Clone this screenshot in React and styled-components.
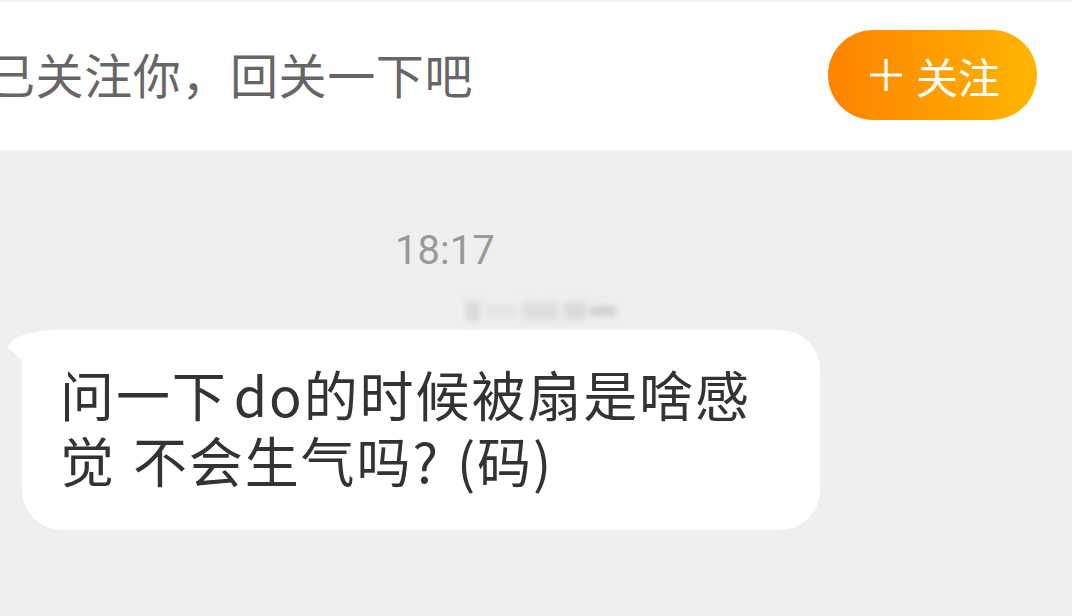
import React from 'react'
import styled, { createGlobalStyle } from 'styled-components'

const GlobalStyle = createGlobalStyle`
  html, body {
    margin: 0;
    padding: 0;
    background: #efefef;
  }
  body {
    width: 1072px;
    height: 616px;
    overflow: hidden;
    font-family: Roboto, "Noto Sans CJK SC", sans-serif;
  }
`

const Page = styled.div`
  display: flex;
  flex-direction: column;
  width: 1072px;
  height: 616px;
  background: #efefef;
`

const Header = styled.div`
  margin-top: 2px;
  height: 148px;
  background: #fff;
  display: flex;
  align-items: center;
  justify-content: space-between;
  padding-right: 35px;
  box-sizing: border-box;
`

const HeaderText = styled.div`
  margin-left: -13px;
  margin-top: -6px;
  font-family: "Noto Sans CJK SC", sans-serif;
  font-size: 48px;
  letter-spacing: 0.6px;
  color: #666;
  white-space: nowrap;
`

const FollowButton = styled.button`
  width: 209px;
  height: 90px;
  border: none;
  border-radius: 45px;
  background: linear-gradient(to right, #ff8200, #ffb500);
  display: flex;
  align-items: center;
  justify-content: center;
  gap: 13px;
  padding: 0 0 0 4px;
  margin-top: -2px;
  color: #fff;
  font-family: "Noto Sans CJK SC", sans-serif;
  font-size: 42px;
  cursor: pointer;
`

const PlusIcon = styled.svg`
  width: 34px;
  height: 34px;
  display: block;
`

const Chat = styled.div`
  display: flex;
  flex-direction: column;
  align-items: flex-start;
`

const Time = styled.div`
  margin-top: 76px;
  padding-left: 395px;
  height: 50px;
  line-height: 50px;
  font-family: Roboto, sans-serif;
  font-size: 40px;
  color: #999;
`

const Nick = styled.div`
  margin-top: 23px;
  margin-left: 466px;
  display: flex;
  align-items: center;
  height: 24px;
  filter: blur(3px);
`

const NickPart = styled.span`
  display: block;
  width: ${p => p.w}px;
  height: ${p => p.h}px;
  margin-right: ${p => p.gap || 0}px;
  background: ${p => p.c};
`

const Bubble = styled.div`
  position: relative;
  margin-top: 7px;
  margin-left: 22px;
  width: 798px;
  box-sizing: border-box;
  padding: 31px 40px 37px 38px;
  background: #fff;
  border-radius: 30px 40px 40px 40px;
  font-family: "Noto Sans CJK SC", sans-serif;
  font-size: 54px;
  letter-spacing: 1.9px;
  word-spacing: 3px;
  line-height: 66px;
  color: #333;
`

const Latin = styled.span`
  margin-left: 6px;
`

const Tail = styled.svg`
  position: absolute;
  left: -14px;
  top: 0;
  width: 60px;
  height: 46px;
`

export default function App() {
  return (
    <>
      <GlobalStyle />
      <Page>
        <Header>
          <HeaderText>已关注你，回关一下吧</HeaderText>
          <FollowButton>
            <PlusIcon viewBox="0 0 34 34">
              <path d="M17 1v32M1 17h32" stroke="#fff" strokeWidth="3.2" fill="none" />
            </PlusIcon>
            <span>关注</span>
          </FollowButton>
        </Header>
        <Chat>
          <Time>18:17</Time>
          <Nick>
            <NickPart w={14} h={20} gap={6} c="#d9d9d9" />
            <NickPart w={30} h={14} gap={6} c="#e4e4e4" />
            <NickPart w={36} h={18} gap={6} c="#dedede" />
            <NickPart w={22} h={18} gap={4} c="#dadada" />
            <NickPart w={26} h={10} c="#d0d0d0" />
          </Nick>
          <Bubble>
            <Tail viewBox="0 0 60 46">
              <path d="M0 17 C4 6 22 0 60 0 L60 46 L14 46 L14 31 Z" fill="#fff" />
            </Tail>
            问一下<Latin>do</Latin>的时候被扇是啥感觉 不会生气吗? (码)
          </Bubble>
        </Chat>
      </Page>
    </>
  )
}
